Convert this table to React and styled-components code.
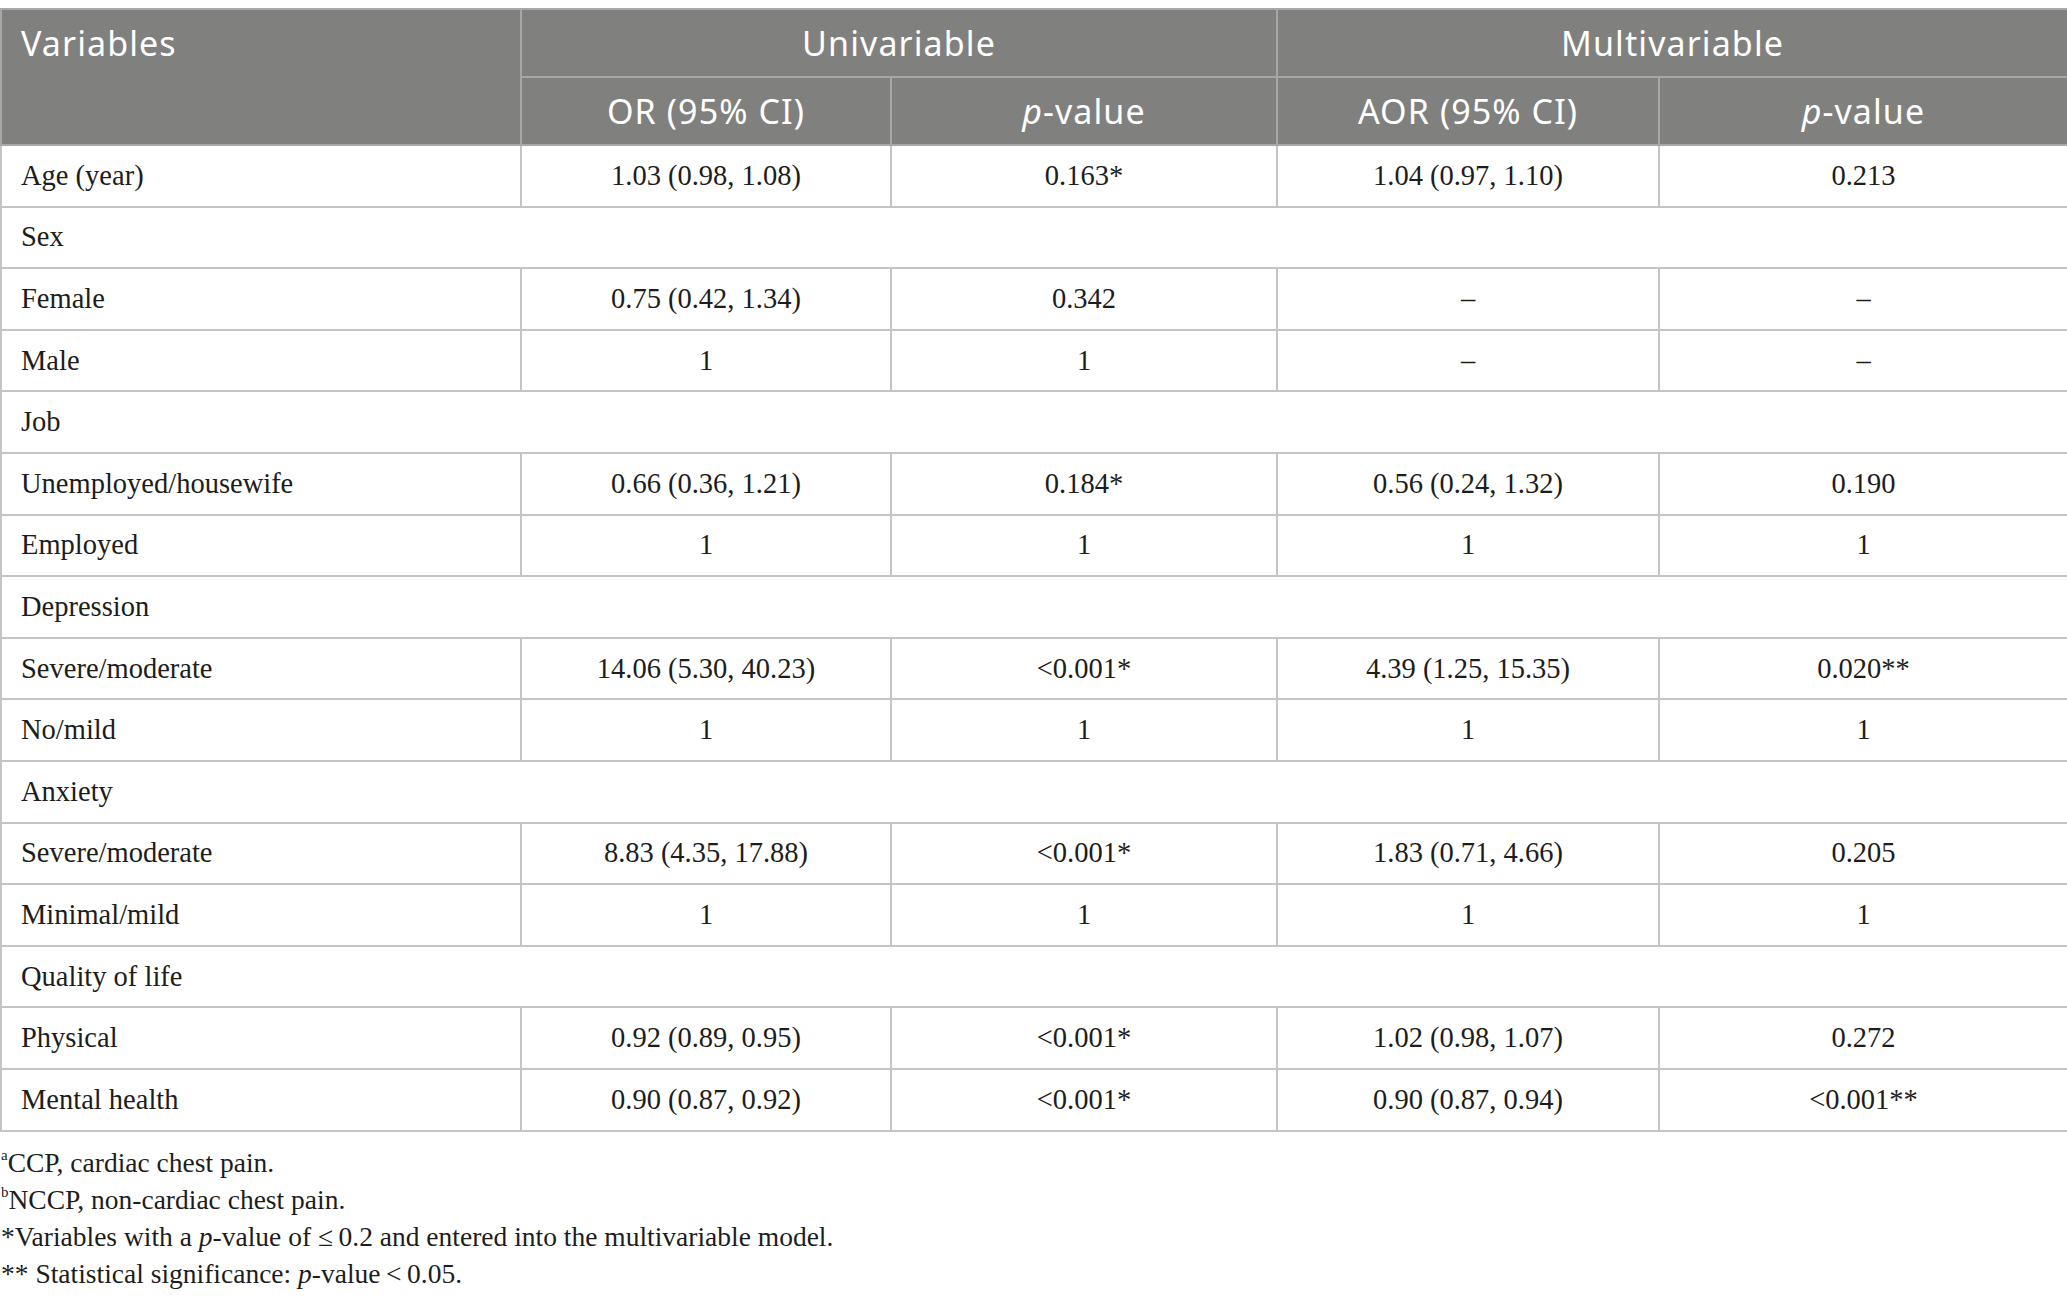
import React from 'react';
import styled, { createGlobalStyle } from 'styled-components';

const GlobalStyle = createGlobalStyle`
  html, body {
    margin: 0;
    padding: 0;
    background: #ffffff;
  }
`;

const Page = styled.div`
  padding-top: 8px;
  width: 2067px;
`;

const Table = styled.table`
  width: 2067px;
  border-collapse: collapse;
  table-layout: fixed;
  border: 2px solid #c4c4c4;
  border-top-color: #a9a9a9;
`;

const HeadRow = styled.tr`
  height: 68px;
`;

const HeadCell = styled.th`
  background: #80817f;
  color: #ffffff;
  font-family: 'Noto Sans', 'Open Sans', sans-serif;
  font-weight: 400;
  font-size: 34px;
  letter-spacing: 1.1px;
  text-align: ${(p) => p.$align || 'center'};
  vertical-align: ${(p) => p.$valign || 'middle'};
  padding: ${(p) => (p.$align === 'left' ? '12px 19px 0' : '0 10px')};
  border: 2px solid #a7a8a6;
  border-top: none;
  line-height: 1.25;

  i {
    font-style: italic;
    letter-spacing: 1px;
  }
`;

const BodyRow = styled.tr`
  height: 61.6px;
`;

const Cell = styled.td`
  font-family: 'Liberation Serif', 'Times New Roman', serif;
  font-size: 28.5px;
  color: #1d1d1b;
  text-align: ${(p) => p.$align || 'center'};
  padding: ${(p) => (p.$align === 'left' ? '0 19px' : '0 8px')};
  border: 2px solid #c4c4c4;
  vertical-align: middle;
  white-space: nowrap;
`;

const Notes = styled.div`
  padding: 12px 0 0 1px;
  font-family: 'Liberation Serif', 'Times New Roman', serif;
  font-size: 27.5px;
  line-height: 37.3px;
  color: #1d1d1b;

  i {
    font-style: italic;
  }

  sup {
    font-size: 15px;
    vertical-align: 12px;
    line-height: 0;
  }
`;

const Note = styled.div`
  white-space: nowrap;
`;

const rows = [
  { label: 'Age (year)', v: ['1.03 (0.98, 1.08)', '0.163*', '1.04 (0.97, 1.10)', '0.213'] },
  { label: 'Sex', group: true },
  { label: 'Female', v: ['0.75 (0.42, 1.34)', '0.342', '–', '–'] },
  { label: 'Male', v: ['1', '1', '–', '–'] },
  { label: 'Job', group: true },
  { label: 'Unemployed/housewife', v: ['0.66 (0.36, 1.21)', '0.184*', '0.56 (0.24, 1.32)', '0.190'] },
  { label: 'Employed', v: ['1', '1', '1', '1'] },
  { label: 'Depression', group: true },
  { label: 'Severe/moderate', v: ['14.06 (5.30, 40.23)', '<0.001*', '4.39 (1.25, 15.35)', '0.020**'] },
  { label: 'No/mild', v: ['1', '1', '1', '1'] },
  { label: 'Anxiety', group: true },
  { label: 'Severe/moderate', v: ['8.83 (4.35, 17.88)', '<0.001*', '1.83 (0.71, 4.66)', '0.205'] },
  { label: 'Minimal/mild', v: ['1', '1', '1', '1'] },
  { label: 'Quality of life', group: true },
  { label: 'Physical', v: ['0.92 (0.89, 0.95)', '<0.001*', '1.02 (0.98, 1.07)', '0.272'] },
  { label: 'Mental health', v: ['0.90 (0.87, 0.92)', '<0.001*', '0.90 (0.87, 0.94)', '<0.001**'] },
];

const widths = [520, 370, 386, 382, 409];

const App = () => (
  <Page>
    <GlobalStyle />
    <Table>
      <colgroup>
        {widths.map((w, i) => (
          <col key={i} style={{ width: w }} />
        ))}
      </colgroup>
      <thead>
        <HeadRow>
          <HeadCell rowSpan={2} $align="left" $valign="top">Variables</HeadCell>
          <HeadCell colSpan={2}>Univariable</HeadCell>
          <HeadCell colSpan={2}>Multivariable</HeadCell>
        </HeadRow>
        <HeadRow>
          <HeadCell>OR (95% CI)</HeadCell>
          <HeadCell><i>p</i>-value</HeadCell>
          <HeadCell>AOR (95% CI)</HeadCell>
          <HeadCell><i>p</i>-value</HeadCell>
        </HeadRow>
      </thead>
      <tbody>
        {rows.map((r, i) =>
          r.group ? (
            <BodyRow key={i}>
              <Cell $align="left" colSpan={5}>{r.label}</Cell>
            </BodyRow>
          ) : (
            <BodyRow key={i}>
              <Cell $align="left">{r.label}</Cell>
              {r.v.map((v, j) => (
                <Cell key={j}>{v}</Cell>
              ))}
            </BodyRow>
          )
        )}
      </tbody>
    </Table>
    <Notes>
      <Note><sup>a</sup>CCP, cardiac chest pain.</Note>
      <Note><sup>b</sup>NCCP, non-cardiac chest pain.</Note>
      <Note>*Variables with a <i>p</i>-value of ≤&#8201;0.2 and entered into the multivariable model.</Note>
      <Note>** Statistical significance: <i>p</i>-value&#8201;&lt;&#8201;0.05.</Note>
    </Notes>
  </Page>
);

export default App;
